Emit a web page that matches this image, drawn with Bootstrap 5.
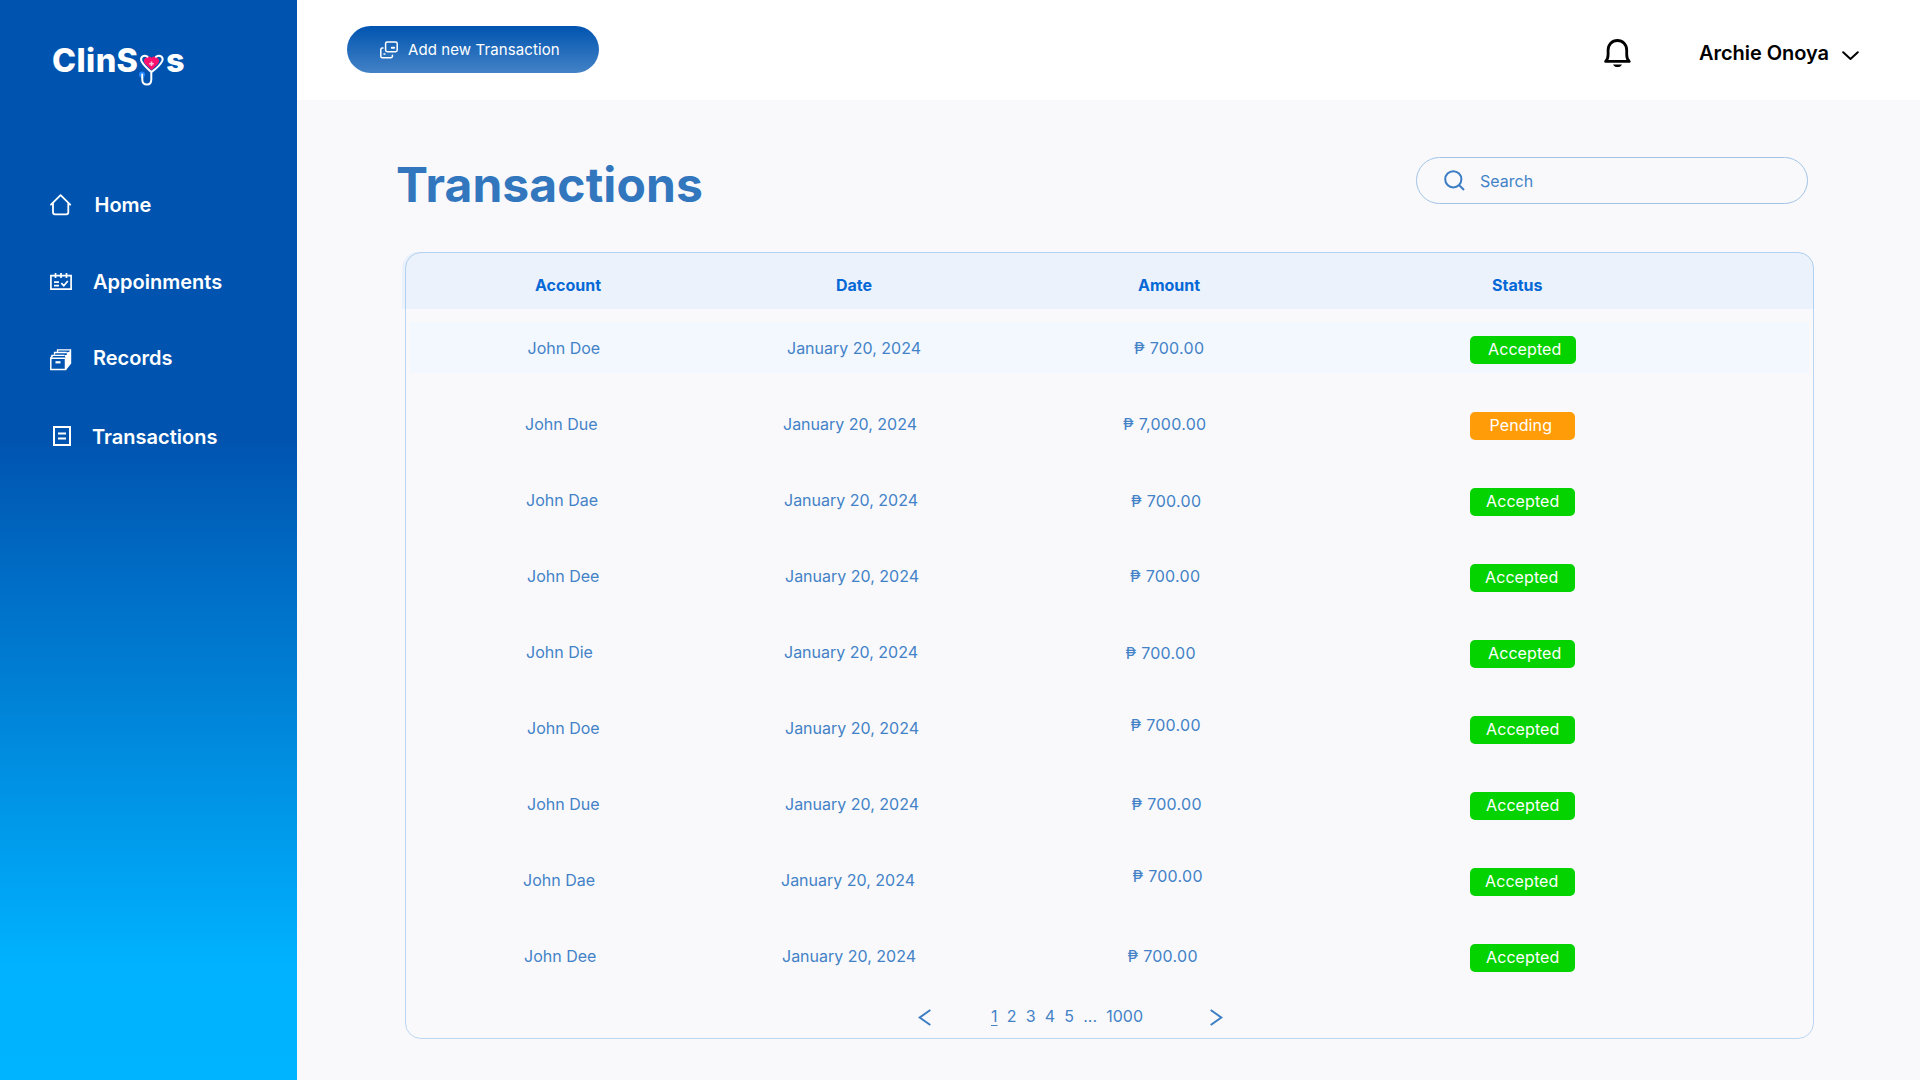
<!DOCTYPE html>
<html lang="en">
<head>
<meta charset="utf-8">
<meta name="viewport" content="width=device-width, initial-scale=1">
<title>ClinSys - Transactions</title>
<link href="https://cdn.jsdelivr.net/npm/bootstrap@5.3.0/dist/css/bootstrap.min.css" rel="stylesheet">
<style>
body{font-family:Inter,"Liberation Sans",sans-serif;background:#f9f9fc;width:1920px;height:1080px;overflow:hidden;color:#4382c6;font-size:16px;line-height:24px}
svg{display:block;flex:none}
.side{width:297px;height:1080px;background:linear-gradient(180deg,#0054b0 0,#0054b0 440px,#00b2ff 965px,#00b4ff 100%)}
.brand{margin:41px 0 0 52px;height:48px;font-size:32.400px;font-weight:800;line-height:40px;letter-spacing:.4px;color:#fff}
.brand svg{margin:11px 0 0 .5px}
.menu{margin-top:104px}
.menu a{height:24px;font-size:20px;font-weight:600;color:#fff;text-decoration:none;padding-left:50px}
.menu .ico{width:44.500px}
.menu .appts{margin-top:53px}
.menu .recs{margin-top:52px}
.menu .trans{margin-top:55px}
.appts .ico,.recs .ico{width:43px}
.recs .ico{padding-top:3px}
.trans .ico{width:42px;margin-top:-2px}
.topbar{height:100px;background:#fff;padding:26px 61px 0 50px}
.add-btn{width:252px;height:47px;border:0;padding:0 0 0 33px;color:#fff;font-size:15px;letter-spacing:.1px;background:linear-gradient(#0054b0,#4382c6)}
.add-btn span{padding:2px 0 0 10px}
.user{color:#000;font-size:20px;font-weight:600;height:54px}
.user .name{margin-left:68px;letter-spacing:-.05px}
.user .caret{margin:5px 0 0 13px}
.heading{height:104px;margin-top:48px;padding:9px 112px 0 99px}
.heading h1{font-size:48px;font-weight:700;line-height:56px;color:#3277be;margin:0;letter-spacing:.1px}
.searchbox{width:392px;height:47px;margin-top:.4px;border:1px solid #a3c3e6;padding-left:27px}
.searchbox span{padding:1px 0 0 15px}
.sheet{width:1409px;height:787px;margin-left:108px;border:1px solid #bcd6f1;border-radius:16px}
.sheet-head{margin:-1px -1px 0 -4px;height:57px;padding:8px 0 0 4px;border-radius:16px 16px 0 0;background:rgba(0,135,235,.055);color:#0568d6;font-weight:700}
.line{height:76px;padding-top:2px}
.line.first-line{background:linear-gradient(#f3f8ff,#f3f8ff) no-repeat 4px 13px/1399px 51px}
.c1{width:300px}.c2,.c3{width:350px}
.sheet-head .c1{padding-left:129px}.sheet-head .c2{padding-left:130px}.sheet-head .c3{padding-left:82px}.sheet-head .c4{padding-left:86px}
.line .c1{padding-left:var(--a)}.line .c2{padding-left:var(--d)}
.line .c3{padding-left:var(--m);margin-top:calc(var(--y,0px)*2);letter-spacing:.27px}
.line .c4{padding:4px 0 0 64px}
.pill{display:block;width:105px;height:28px;border-radius:5px;color:#fff;line-height:27px;padding-left:var(--t);background:#05d300;letter-spacing:.1px}
.pill.wait{background:#ff9c07}
.first-line .pill{width:106px}
.l1{--a:121.5px;--d:81px;--m:78px;--t:18px}
.l2{--a:119px;--d:77px;--m:67px;--t:19.5px}
.l3{--a:120px;--d:78px;--m:75px;--y:1px;--t:16px}
.l4{--a:121px;--d:79px;--m:74px;--t:15px}
.l5{--a:120px;--d:78px;--m:69.5px;--y:1px;--t:18px}
.l6{--a:121px;--d:79px;--m:74.5px;--y:-3px;--t:16px}
.l7{--a:121px;--d:79px;--m:75.5px;--t:16px}
.l8{--a:117px;--d:75px;--m:76.5px;--y:-4px;--t:15px}
.l9{--a:118px;--d:76px;--m:71.5px;--t:16px}
.pager{height:44px;padding:2px 0 0 512px}
.pager .nums{margin-left:60px;width:211px}
.pager .nums span{margin-right:9.200px}
.pager .on{text-decoration:underline;text-underline-offset:3px;text-decoration-thickness:1px}
.pager .next{margin-left:8px}
.pager svg{margin-top:2px}
</style>
</head>
<body class="d-flex">
<aside class="side d-flex flex-column">
  <div class="brand d-flex"><span>ClinS</span>
    <svg width="27" height="36" viewBox="0 0 27 36" fill="none"><path d="M12.500 18.300 5.800 11.400A4.400 4.400 0 0 1 12.500 5.800a4.400 4.400 0 0 1 6.700 5.600Z" fill="#ff0f6e"/><path d="M8.500 4.600C4.500 2.300.9 5.200 2.500 9.200c1.800 4 5.500 7 9.800 10.900 4.800-3.300 9-6.900 11-11.200C24.800 5.100 20.800 2 17 4.800M12.300 20v7.500c0 3.200-1.600 5-4.300 5s-4.700-1.800-4.700-4.800V24" stroke="#fff" stroke-width="2" stroke-linecap="round" stroke-linejoin="round"/><circle cx="3" cy="22.500" r="3" fill="#2488ff"/><path d="M3.200 22.500v3" stroke="#fff" stroke-width="1.800" stroke-linecap="round"/><path d="M12.500 9.500v4.600M10.200 11.800h4.600" stroke="#ffc4dc" stroke-width="1.600"/></svg>
    <span>s</span></div>
  <nav class="menu d-flex flex-column">
    <a href="#" class="d-flex align-items-center"><span class="ico"><svg width="22" height="22" viewBox="0 0 22 22" fill="none" stroke="#fff" stroke-width="1.800" stroke-linecap="round" stroke-linejoin="round"><path d="M1 10.700 10.600 1.200 20.200 10.700M3 9v9.300a2 2 0 0 0 2 2h11.300a2 2 0 0 0 2-2V9"/></svg></span>Home</a>
    <a href="#" class="d-flex align-items-center appts"><span class="ico"><svg width="22" height="18" viewBox="0 0 22 18" fill="none" stroke="#fff" stroke-width="1.700"><path d="M.9 2.700h20.200v13.500H.9ZM5.500 0v5M11 0v5M16.500 0v5M4 9.200h5M4 12.700h5M11.300 10.200l2.500 2.500 4-4.700"/></svg></span>Appoinments</a>
    <a href="#" class="d-flex align-items-center recs"><span class="ico"><svg width="22" height="22" viewBox="0 0 22 22" fill="none" stroke="#fff" stroke-width="1.300"><path d="M7.500 3V.8h13M4.500 5.600V3.500h12.300M2 8.300V6.300h12.500"/><path d="M20.200.2h1V14.500L16 21V9.300L14.300 6.300 17 5.800l-.5-2.300 2.800-.8Z" fill="#fff" stroke="none"/><path d="M.8 9.300h14.700v11.200H.8Z" stroke-width="1.500"/><path d="M.8 9.300 2.200 6.300"/><path d="M5.500 13.300h5" stroke-width="2.200"/></svg></span>Records</a>
    <a href="#" class="d-flex align-items-center trans"><span class="ico"><svg width="22" height="20" viewBox="0 0 22 20" fill="none" stroke="#fff" stroke-width="2"><path d="M4 1h16v18H4ZM8 7.500h8M8 12.500h8"/></svg></span>Transactions</a>
  </nav>
</aside>
<main class="flex-grow-1">
  <header class="topbar d-flex justify-content-between align-items-start">
    <button class="add-btn btn rounded-pill d-flex align-items-center"><svg width="18" height="18" viewBox="0 0 18 18" fill="none" stroke="#fff" stroke-width="1.500" stroke-linecap="round" stroke-linejoin="round"><rect x="5.600" y=".9" width="11.600" height="9.800" rx="1.600"/><path d="M3 7H2.400A1.600 1.600 0 0 0 .8 8.600v6.600a1.600 1.600 0 0 0 1.600 1.600h8.400a1.600 1.600 0 0 0 1.600-1.600v-1M4 13.100h.9"/><path d="M11.800 6.800h2.300" stroke-width="2"/></svg><span>Add new Transaction</span></button>
    <div class="user d-flex align-items-center">
      <svg width="27" height="29" viewBox="0 0 27 29" fill="none"><path d="M1.600 22.400c1.700-1.700 2.500-3.700 2.500-7V11.200C4.100 5.600 8 1.500 13.400 1.500s9.300 4.100 9.300 9.700v4.200c0 3.300.8 5.300 2.500 7Z" stroke="#000" stroke-width="2.800" stroke-linejoin="round"/><path d="M9 25.500h9c-.8 1.600-2.400 2.600-4.500 2.600S9.800 27.100 9 25.500Z" fill="#000"/></svg>
      <span class="name">Archie Onoya</span>
      <svg class="caret" width="17" height="10" viewBox="0 0 17 10" fill="none" stroke="#000" stroke-width="2" stroke-linecap="round" stroke-linejoin="round"><path d="M1.200 1.200 8.500 8l7.300-6.800"/></svg>
    </div>
  </header>
  <section class="heading d-flex justify-content-between align-items-start">
    <h1>Transactions</h1>
    <label class="searchbox rounded-pill d-flex align-items-center"><svg width="21" height="21" viewBox="0 0 21 21" fill="none" stroke="#3c7dc3" stroke-width="2"><circle cx="9.300" cy="9.300" r="8.100"/><path d="m15 15 5 5"/></svg><span>Search</span></label>
  </section>
  <section class="sheet">
    <div class="sheet-head d-flex align-items-center"><div class="c1">Account</div><div class="c2">Date</div><div class="c3">Amount</div><div class="c4">Status</div></div>
    <div class="line first-line l1 d-flex align-items-center"><div class="c1">John Doe</div><div class="c2">January 20, 2024</div><div class="c3">₱ 700.00</div><div class="c4"><span class="pill">Accepted</span></div></div>
    <div class="line l2 d-flex align-items-center"><div class="c1">John Due</div><div class="c2">January 20, 2024</div><div class="c3">₱ 7,000.00</div><div class="c4"><span class="pill wait">Pending</span></div></div>
    <div class="line l3 d-flex align-items-center"><div class="c1">John Dae</div><div class="c2">January 20, 2024</div><div class="c3">₱ 700.00</div><div class="c4"><span class="pill">Accepted</span></div></div>
    <div class="line l4 d-flex align-items-center"><div class="c1">John Dee</div><div class="c2">January 20, 2024</div><div class="c3">₱ 700.00</div><div class="c4"><span class="pill">Accepted</span></div></div>
    <div class="line l5 d-flex align-items-center"><div class="c1">John Die</div><div class="c2">January 20, 2024</div><div class="c3">₱ 700.00</div><div class="c4"><span class="pill">Accepted</span></div></div>
    <div class="line l6 d-flex align-items-center"><div class="c1">John Doe</div><div class="c2">January 20, 2024</div><div class="c3">₱ 700.00</div><div class="c4"><span class="pill">Accepted</span></div></div>
    <div class="line l7 d-flex align-items-center"><div class="c1">John Due</div><div class="c2">January 20, 2024</div><div class="c3">₱ 700.00</div><div class="c4"><span class="pill">Accepted</span></div></div>
    <div class="line l8 d-flex align-items-center"><div class="c1">John Dae</div><div class="c2">January 20, 2024</div><div class="c3">₱ 700.00</div><div class="c4"><span class="pill">Accepted</span></div></div>
    <div class="line l9 d-flex align-items-center"><div class="c1">John Dee</div><div class="c2">January 20, 2024</div><div class="c3">₱ 700.00</div><div class="c4"><span class="pill">Accepted</span></div></div>
    <div class="pager d-flex align-items-center">
      <svg width="13" height="17" viewBox="0 0 13 17" fill="none" stroke="#3c7dc3" stroke-width="2"><path d="M12.300 1 1.700 8.500l10.600 7.500"/></svg>
      <div class="nums d-flex"><span class="on">1</span><span>2</span><span>3</span><span>4</span><span>5</span><span>...</span><span>1000</span></div>
      <svg class="next" width="13" height="17" viewBox="0 0 13 17" fill="none" stroke="#3c7dc3" stroke-width="2"><path d="m.7 1 10.600 7.500L.7 16"/></svg>
    </div>
  </section>
</main>
<script src="https://cdn.jsdelivr.net/npm/bootstrap@5.3.0/dist/js/bootstrap.bundle.min.js"></script>
</body>
</html>
